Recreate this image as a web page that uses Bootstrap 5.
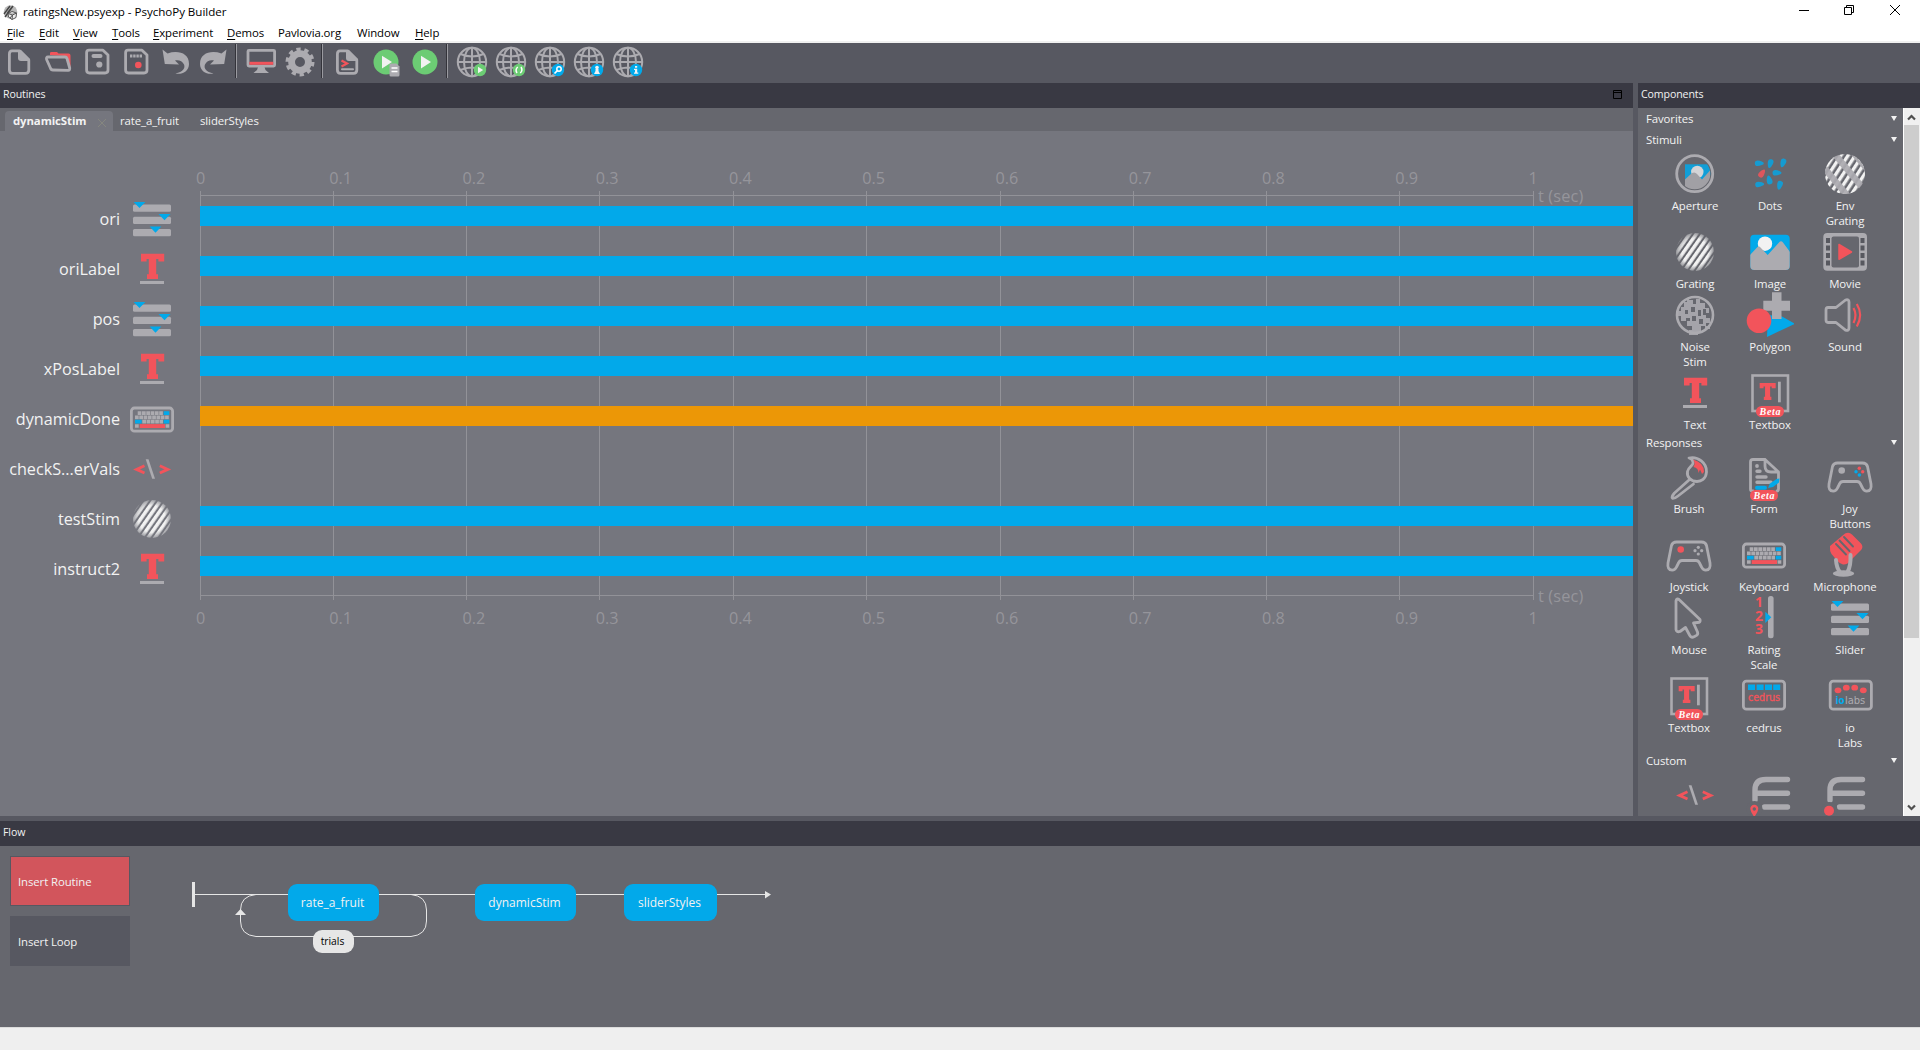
<!DOCTYPE html>
<html lang="en">
<head>
<meta charset="utf-8">
<title>ratingsNew.psyexp - PsychoPy Builder</title>
<link href="https://cdn.jsdelivr.net/npm/bootstrap@5.3.0/dist/css/bootstrap.min.css" rel="stylesheet">
<style>
:root{--pane:#66676e;--canvas:#75767e;--frame:#575861;--cap:#393943;--ico:#acabb0;--red:#f2545b;--blue:#02a9ea;--lt:#f2f2f2}
body{font-family:"Open Sans","Noto Sans",sans-serif;font-size:11.4px;letter-spacing:-.1px;line-height:15px;color:var(--lt);background:var(--frame);height:1050px;width:1920px;overflow:hidden}
svg{display:block;overflow:visible;flex:none}
.defs{position:absolute}
.titlebar{height:24px;color:#000;background:#fff;padding-left:3px}
.titlebar .doc-title{padding-left:5px;font-size:11.6px;letter-spacing:-.04px;margin-top:-2px}
.menus{height:19px;color:#000;background:#fff;border-bottom:2px solid #f0f0f0;padding-left:7px}
.menus span:nth-child(1){width:32px}.menus span:nth-child(2){width:34px}.menus span:nth-child(3){width:39px}.menus span:nth-child(4){width:41px}.menus span:nth-child(5){width:74px}.menus span:nth-child(6){width:51px}.menus span:nth-child(7){width:79px}.menus span:nth-child(8){width:58px}
.menus u{text-underline-offset:2px}
.tools{height:40px;background:var(--frame)}
.tools svg{width:40px;height:40px;margin:-2px -1px 0 0}
.tools svg:first-child{margin-left:-1px}
.tools i{width:2px;height:34px;margin:0 4px 4px 2px;background:linear-gradient(90deg,#33333a 50%,#9a9aa0 50%)}
.cap{height:25px;background:var(--cap);padding:0 0 2px 3px;font-size:10.6px}
.left-pane{width:1633px}
.tabs{height:23px;background:var(--pane);padding-left:5px}
.tab-on{height:20px;width:108px;background:var(--canvas);border-radius:4px 4px 0 0;padding-left:8px}
.tab-on b{margin-top:-2px}
.tab-off{padding:0 0 3px 7px;min-width:80px}
.timeline{height:685px;background:var(--canvas)}
.axis-labels{height:20px;padding-left:196px;font-size:16.2px;letter-spacing:0;color:#95959b}
.axis-labels span{width:133.25px;flex:none}
.axis-wrap{overflow:hidden;width:1633px}
.gridlines{position:absolute;left:0;top:0}
.tsec{position:absolute;left:1538px;font-size:16.4px;letter-spacing:.1px;color:#95959b}
.trow{height:50px}
.trow .nm{width:120px;text-align:right;font-size:16.2px;letter-spacing:0;line-height:20px;margin-top:-1px}
.trow svg{width:48px;height:48px;margin:0 24px 0 8px}
.trow .barr{height:20px;background:var(--blue);margin-bottom:6px}
.trow .barr.key{background:#ec9706}
.comp{width:282px}
.palette{height:708px;background:var(--pane);overflow:hidden}
.sect{height:21px;padding:0 6px 1px 8px}
.grp{display:grid;grid-template-columns:75px 75px 75px;padding-left:19.5px}
.grp.wide{grid-template-columns:75px 75px 97px;padding-left:13.5px}
.grp>div{display:flex;flex-direction:column;align-items:center;text-align:center}
.grp svg{width:48px;height:48px}
.scroller{width:17px;background:#f0f0f0;border-left:1px solid #fff;padding:17px 1px 0 0}
.scroller .thumb{height:513px;background:#cdcdcd;width:15px}
.flowpane{height:181px;background:var(--pane);padding:10px}
.fbtn{width:120px;height:50px;padding-left:7px;margin-bottom:10px;background:var(--frame);border:1px solid var(--frame)}
.fbtn.hot{background:#d2555c}
.node{position:absolute;top:38px;height:37px;border-radius:9px;background:var(--blue);font-size:12px;letter-spacing:0;padding-right:2px}
.foot{height:23px;background:#efefef;border-top:1px solid #dcdcdc}
.s{fill:none;stroke:var(--ico);stroke-width:2.8;stroke-linejoin:round;stroke-linecap:round}
.g{fill:var(--ico)}.r{fill:var(--red)}.b{fill:var(--blue)}.w{fill:#f2f2f2}.gn{fill:#6ccc74}
</style>
</head>
<body>
<svg class="defs" width="0" height="0">
<defs>
<pattern id="stripes" width="5.6" height="5.6" patternUnits="userSpaceOnUse" patternTransform="rotate(35)"><rect width="3.5" height="6" fill="#f2f2f2"/></pattern>
<pattern id="stripes2" width="6" height="6" patternUnits="userSpaceOnUse" patternTransform="rotate(33)"><rect width="3.4" height="7" fill="#f2f2f2"/></pattern>
<radialGradient id="fade"><stop offset=".7" stop-color="#fff"/><stop offset="1" stop-color="#fff" stop-opacity=".35"/></radialGradient>
<mask id="disc"><circle cx="24" cy="24" r="19" fill="url(#fade)"/></mask>
<clipPath id="c20"><circle cx="24" cy="24" r="20"/></clipPath>
<clipPath id="c16"><circle cx="23.7" cy="23.7" r="15.6"/></clipPath>
<clipPath id="cimg"><rect x="4.3" y="6.7" width="39.4" height="35.3" rx="4"/></clipPath>
<path id="drop" d="M-4.5 0C-4.5-3.6-1-3.2 2.5-1.8Q4.8-.6 4.5.2Q4.3 1.2 2.5 1.8C-1 3.2-4.5 3.6-4.5 0Z"/>
<g id="tee"><path class="r" d="M13 8.7H36.2V16.6H30.4V14H28.2V29.3H30V34H19V29.3H20.8V14H18.6V16.6H13Z"/></g>
<g id="beta"><rect class="r" x="10" y="37" width="28" height="11" rx="5.5"/><text x="24" y="45.7" text-anchor="middle" textLength="21" font-family="Liberation Serif,serif" font-weight="bold" font-style="italic" font-size="10" fill="#fff">Beta</text></g>
<g id="pad"><path class="s" d="M11.5 10H36.5Q40.5 10 41.5 13.500L45 31Q46 38 40.800 38.200Q38 38.200 36.500 35L34.500 31Q33.500 28.500 31 28.500H17Q14.500 28.500 13.500 31L11.500 35Q10 38.200 7.200 38.200Q2 38 3 31L6.500 13.500Q7.500 10 11.500 10Z"/></g>
<g id="globe"><g fill="none" stroke="#acabb0" stroke-width="2"><circle cx="20" cy="20" r="14.2"/><ellipse cx="20" cy="20" rx="8" ry="14.2"/><path d="M20 6V34M6 20H34M8.500 12Q20 17 31.500 12M8.500 28Q20 23 31.500 28"/></g></g>
</defs>
<symbol id="i-slider" viewBox="0 0 48 48"><g class="g"><rect x="5" y="9.600" width="38" height="7.200" rx="1.500"/><rect x="5" y="21.800" width="38" height="7.200" rx="1.500"/><rect x="5" y="34" width="38" height="7.200" rx="1.500"/></g><path class="b" d="M5.600 7H17.400L11.500 13ZM30.500 19H42.500L36.500 25.200ZM21.600 31.600H33.400L27.500 37.800Z"/></symbol>
<symbol id="i-text" viewBox="0 0 48 48"><use href="#tee"/><rect class="g" x="12" y="36" width="24" height="3"/></symbol>
<symbol id="i-key" viewBox="0 0 48 48"><rect class="s" x="3.400" y="13" width="41.200" height="23.200" rx="3"/><g fill="none" stroke="#acabb0" stroke-width="3.700" stroke-dasharray="3.700 .6"><path d="M9.700 18.100H35M7 22.400H41.300M14.300 26.700H35M7 31H11M37.600 31H41.300"/></g><path class="b" d="M35.700 16.200H41.300V20H35.700ZM7 24.800H13.700V28.600H7ZM35.700 24.800H41.300V28.600H35.700Z"/><rect class="r" x="11.700" y="29.100" width="25.300" height="3.900"/></symbol>
<symbol id="i-code" viewBox="0 0 48 48"><path fill="none" stroke="#f2545b" stroke-width="2.800" d="M16.500 20.800L8.500 24.400L16.500 28M31.800 20.800L39.800 24.400L31.800 28"/><path d="M17.700 14.300H20.500L27 33.700H24.200Z" class="g"/></symbol>
<symbol id="i-grating" viewBox="0 0 48 48"><rect width="48" height="48" fill="url(#stripes)" mask="url(#disc)"/></symbol>
<symbol id="i-env" viewBox="0 0 48 48"><g clip-path="url(#c20)"><rect width="48" height="48" fill="url(#stripes2)"/><path d="M12 2L45 42M0 14L30 50" stroke="#acabb0" stroke-width="6.500" opacity=".92"/><path d="M28 0L50 26" stroke="#acabb0" stroke-width="3"/></g></symbol>
<symbol id="i-aperture" viewBox="0 0 48 48"><g clip-path="url(#c16)" opacity=".85"><path class="b" d="M14 14.300H40V40H14Z"/><circle cx="26.300" cy="22" r="6.200" fill="#e8e8ea"/><path class="g" d="M14 29.500L21 23Q24 21.500 26 24L31 29.500L39 20.500V42H14Z"/></g><circle class="s" cx="23.700" cy="23.700" r="18"/></symbol>
<symbol id="i-dots" viewBox="0 0 48 48"><g class="b" opacity=".8"><use href="#drop" transform="translate(13.300 13.300)"/><use href="#drop" transform="translate(24.300 13.700) rotate(105)"/><use href="#drop" transform="translate(37 13) rotate(108)"/><use href="#drop" transform="translate(31 22.700)"/><use href="#drop" transform="translate(23.300 30) rotate(-105)"/><use href="#drop" transform="translate(13.700 34.300) rotate(-6)"/><use href="#drop" transform="translate(33.700 35.300) rotate(105)"/></g><use href="#drop" class="r" opacity=".85" transform="translate(16 23.300) rotate(-55)"/></symbol>
<symbol id="i-image" viewBox="0 0 48 48"><g clip-path="url(#cimg)"><path class="b" d="M0 0H48V48H0Z"/><circle class="w" cx="19" cy="15.700" r="7.200"/><path class="g" d="M4 27L11 19.500Q13 17.500 14.500 19.500L21.700 27L33 14.500Q35 12 37 14.500L44 24V42H4Z"/></g></symbol>
<symbol id="i-movie" viewBox="0 0 48 48"><rect class="g" x="2.300" y="5" width="43.700" height="37.700" rx="4"/><rect x="10.500" y="8.500" width="27.500" height="31" rx="2" fill="#66676e"/><g fill="#57585f"><path d="M5 10h4v5H5zM5 17.500h4v5H5zM5 25h4v5H5zM5 32.500h4v5H5zM39.500 10h4v5h-4zM39.500 17.500h4v5h-4zM39.500 25h4v5h-4zM39.500 32.500h4v5h-4z"/></g><path d="M18 16.500V31.300L30.500 24Z" class="r" stroke="#f2545b" stroke-width="1.500" stroke-linejoin="round"/></symbol>
<symbol id="i-noise" viewBox="0 0 48 48"><circle cx="24" cy="24" r="18" fill="none" stroke="#acabb0" stroke-width="2.600"/><path fill="#acabb0" opacity=".9" d="M18 9h4v4h3v-5h4v4h5v5h4v5h-3v-4h-3v6h3v3h4v5h-4v3h4v3h-5v-3h-4v6h-3v3h-9v-5h3v-4h-5v-5h3v-3h-4v3h-5v-5h-3v-5h3v-4h3v-5h3v-4h2zM20 16v5h4v-5zM27 19v6h3v-6zM21 25v5h4v-5zM28 28v5h4v-5zM14 19v4h3v-4z"/></symbol>
<symbol id="i-poly" viewBox="0 0 48 48"><path class="b" d="M22 24L36 25.500L49 32.700L21 46Z"/><path class="g" d="M26 1.300H35.500V9.700H44V19.700H35.500V28H26V19.700H17.300V9.700H26Z"/><circle class="r" cx="13" cy="29.700" r="12.300"/></symbol>
<symbol id="i-sound" viewBox="0 0 48 48"><path class="s" d="M7 16.500H15L24.500 9Q28 8 28 11V37Q28 40 24.500 39.200L15 31.500H7Q5 31.500 5 29V19Q5 16.500 7 16.500Z"/><path d="M32.500 17Q36.500 24 32.500 32M35.800 13Q42.500 24 35.800 35.500" fill="none" stroke="#f2545b" stroke-width="2.200"/></symbol>
<symbol id="i-textbox" viewBox="0 0 48 48"><rect x="6.500" y="6.500" width="35.500" height="35.500" fill="none" stroke="#acabb0" stroke-width="2.600"/><use href="#tee" transform="translate(4.700 8.200) scale(.69 .67)"/><rect class="g" x="32" y="12.700" width="2.800" height="20.600"/><use href="#beta"/></symbol>
<symbol id="i-brush" viewBox="0 0 48 48"><path class="s" d="M24 5C33 3 42 10 41.500 19C41 26 36 28.500 32 28.500C26 28.500 21.500 24 22.500 18.500C23.500 13.500 29 12.500 28 9Q27.500 6 24 5ZM24 27L9.500 40Q6 44 7.500 45.300Q10 45.500 13 43L28.500 31"/><path d="M28 6.500Q39 9.500 39 19L37 21Q36 18 35 16.500L33.500 20Q33.500 15 28.500 14Q31 10 28 6.500Z" class="r"/></symbol>
<symbol id="i-form" viewBox="0 0 48 48"><path class="s" d="M13 38H12Q10.500 38 10.500 36V9Q10.500 6.500 13 6.500H25L38.500 19V36Q38.500 38 37 38M25 6.500V13Q25 19 31 19H38.500"/><circle class="g" cx="17" cy="13" r="1.900"/><path d="M17 18.300H20M17 24H26M17 29.300H31" fill="none" stroke="#acabb0" stroke-width="3.400" stroke-linecap="round"/><path d="M17 34.700H25" stroke="#02a9ea" stroke-width="4" stroke-linecap="round"/><path class="b" d="M28 35L30 30.500L36.500 26L39.500 25.500L39 29.500L33 34Z"/><use href="#beta"/></symbol>
<symbol id="i-joyb" viewBox="0 0 48 48"><use href="#pad"/><circle class="g" cx="15.700" cy="17.500" r="3.300"/><g class="r"><circle cx="33.300" cy="15.300" r="1.700"/><circle cx="36.700" cy="18.700" r="1.700"/></g><g class="b"><circle cx="30" cy="18.700" r="1.700"/><circle cx="33.300" cy="22" r="1.700"/></g></symbol>
<symbol id="i-joys" viewBox="0 0 48 48"><g transform="translate(0 1)"><use href="#pad"/><circle class="r" cx="15.700" cy="17.500" r="3.300"/><g class="g"><circle cx="33.300" cy="15.300" r="1.600"/><circle cx="36.700" cy="18.700" r="1.600"/><circle cx="30" cy="18.700" r="1.600"/><circle cx="33.300" cy="22" r="1.600"/></g></g></symbol>
<symbol id="i-mic" viewBox="0 0 48 48"><ellipse class="g" cx="22.500" cy="42.500" rx="10.700" ry="3.200"/><path class="r" d="M24 2.500Q28 .5 31 3.500L40 12.500Q42.500 15.500 40.500 18.500L29 30Q26 34 22 33.500Q19 33 16 29.500L10.500 23Q8.500 20 9 15Z"/><path fill="none" stroke="#acabb0" stroke-width="4" stroke-linecap="round" d="M15 29Q15.500 37 19 41M29.500 24Q30 35 26.500 41"/><path d="M15 13L25 23.500M18.500 9.500L28.500 20M23 6L32 15.500" stroke="#66676e" stroke-width="1.900" stroke-linecap="round"/></symbol>
<symbol id="i-mouse" viewBox="0 0 48 48"><path class="s" d="M11.500 5.500Q12.500 4.500 14 5.500L35 25.500Q36 28.500 32.500 28.500L28.500 29L32.500 38Q33.500 41 30.500 42L28 43.200Q25.500 43.500 24.500 41L20.500 33.500L15 37.500Q11.500 38.500 11 35.500V7Z"/></symbol>
<symbol id="i-rating" viewBox="0 0 48 48"><g font-family="Open Sans,sans-serif" font-weight="bold" font-size="14" fill="#f2545b" text-anchor="middle"><text x="19" y="13">1</text><text x="19" y="27">2</text><text x="19" y="40">3</text></g><rect class="g" x="28" y="2" width="5.600" height="42.300" rx="2.500"/><path class="b" d="M25.300 17.700V29L31.300 23.300Z"/></symbol>
<symbol id="i-cedrus" viewBox="0 0 48 48"><rect class="s" x="3.400" y="9.200" width="41.200" height="28" rx="3"/><path class="b" d="M8 12.500h7v5.500h-7zM16.600 12.500h7v5.500h-7zM25 12.500h7v5.500h-7zM33.200 12.500h7v5.500h-7z"/><text x="8" y="28.700" textLength="32" lengthAdjust="spacingAndGlyphs" font-family="DejaVu Sans,sans-serif" font-size="10" fill="#f2545b" stroke="#f2545b" stroke-width=".3">cedrus</text></symbol>
<symbol id="i-io" viewBox="0 0 48 48"><rect class="s" x="4.200" y="9.200" width="41.200" height="28" rx="3"/><g class="r"><ellipse cx="12" cy="18.300" rx="3.400" ry="2.900"/><ellipse cx="20.300" cy="15.700" rx="3.400" ry="2.900"/><ellipse cx="28.700" cy="15.700" rx="3.400" ry="2.900"/><ellipse cx="37.300" cy="18.300" rx="3.400" ry="2.900"/></g><g font-family="DejaVu Sans,sans-serif" font-size="10.500"><text x="9.500" y="31.700" textLength="9" lengthAdjust="spacingAndGlyphs" font-weight="bold" fill="#02a9ea">io</text><text x="19" y="31.700" textLength="20" lengthAdjust="spacingAndGlyphs" fill="#acabb0">labs</text></g></symbol>
<symbol id="i-var" viewBox="0 0 48 48"><path fill="none" stroke="#acabb0" stroke-width="5.400" stroke-linecap="round" d="M41.500 8.500H20Q9 8.500 9 19V29M9 22.300H41.500M18.500 36H41.500"/></symbol>
<symbol id="t-new" viewBox="0 0 40 40"><path class="s" d="M13 8.800H20.500L29.800 18V28Q29.800 31.300 26.500 31.300H13.500Q10.400 31.300 10.400 28V12Q10.400 8.800 13 8.800Z"/><path class="g" d="M19 8H22L31 17V19H22Q19 19 19 16Z"/></symbol>
<symbol id="t-open" viewBox="0 0 40 40"><path class="r" d="M12 13V11Q12 10 13.500 10H19L20.500 11.500H30.500Q32.500 11.500 32.500 13.500V27L29 14.500L27.500 14Z"/><path class="s" d="M10 15H27Q28.500 15 29 16.500L31.700 26Q32 28.500 30 28.300L15 28Q13 28 12.400 26L8.600 17.500Q8 15 10 15Z"/></symbol>
<symbol id="t-save" viewBox="0 0 40 40"><path class="s" d="M12 8.200H26L31 13V28Q31 31 28 31H12.500Q9.600 31 9.600 28V11Q9.600 8.200 12 8.200Z"/><rect class="g" x="14.500" y="12" width="11" height="4" rx="2"/><circle class="g" cx="22.300" cy="22.500" r="3.100"/></symbol>
<symbol id="t-saveas" viewBox="0 0 40 40"><path class="s" d="M12 8.200H26L31 13V28Q31 31 28 31H12.500Q9.600 31 9.600 28V11Q9.600 8.200 12 8.200Z"/><path d="M14 14H26.500" stroke="#acabb0" stroke-width="3" stroke-dasharray="2.400 .8"/><circle class="r" cx="22.300" cy="23" r="3.300"/></symbol>
<symbol id="t-undo" viewBox="0 0 40 40"><path class="g" d="M7.500 7.500L12.500 11.500C23 8 34 11 34 22C34 30 26 33 20.500 31.500C28 30 30.500 26 29 22.500C27.500 18.500 23 17.500 20 18.500L24 22.500L9.800 22Z"/></symbol>
<symbol id="t-mon" viewBox="0 0 40 40"><rect class="s" x="7" y="8.300" width="26.600" height="15.800" rx="1"/><rect class="r" x="8.400" y="19.800" width="23.800" height="3"/><path class="g" d="M17 25H23.500L24.500 28L28 31H12.500L16 28Z"/></symbol>
<symbol id="t-gear" viewBox="0 0 40 40"><g fill="none" stroke="#acabb0"><circle cx="20" cy="20" r="8.400" stroke-width="6.800"/><circle cx="20" cy="20" r="12.500" stroke-width="4" stroke-dasharray="4.200 3.654"/></g></symbol>
<symbol id="t-coder" viewBox="0 0 40 40"><path class="s" d="M13 8.800H20.500L29.800 18V28Q29.800 31.300 26.500 31.300H13.500Q10.400 31.300 10.400 28V12Q10.400 8.800 13 8.800Z"/><path class="g" d="M19 8H22L31 17V19H22Q19 19 19 16Z"/><path d="M14.500 18.500L20 21.500L14.500 24.500" fill="none" stroke="#f2545b" stroke-width="2.200"/><path d="M15 27.300H26" fill="none" stroke="#acabb0" stroke-width="2" stroke-linecap="round"/></symbol>
<symbol id="t-run" viewBox="0 0 40 40"><circle class="gn" cx="20" cy="20" r="12.500"/><path class="w" d="M16 13.800V26.500L26 20.100Z"/></symbol>
<symbol id="t-runner" viewBox="0 0 40 40"><use href="#t-run" width="40" height="40"/><path class="g" d="M25 21.500H30.500L33.500 24.500V33Q33.500 34.500 32 34.500H25Q23.500 34.500 23.500 33V23Q23.500 21.500 25 21.500Z"/><path d="M25.500 26H31.500M25.500 29.500H31.500" stroke="#fff" stroke-width="1.600"/></symbol>
</svg>

<header>
  <div class="titlebar d-flex align-items-center">
    <svg width="15" height="15" viewBox="0 0 15 15"><circle cx="7.500" cy="7" r="6.800" fill="#b8b8b8"/><path d="M1 9L7 1M2 12L10 1M4.500 8L9.500 1.500" stroke="#444" stroke-width="1.400"/><path d="M5 8.500L9 6.500L13.500 8L13 12.500L9 14.500L5.500 12ZM5 8.500L9.500 10L13.500 8M9.500 10L9 14.500M9.500 10L7 13" stroke="#555" stroke-width="1" fill="#eee"/></svg>
    <span class="doc-title">ratingsNew.psyexp - PsychoPy Builder</span>
    <svg class="ms-auto" width="122" height="20" viewBox="0 0 122 20" fill="none" stroke="#000"><path d="M1 8.500H11M46.500 5.500H53.500V12.500H46.500ZM48.500 5V3.500H55.500V10.500H54M92 3L102 13M102 3L92 13"/></svg>
  </div>
  <nav class="menus d-flex align-items-center"><span><u>F</u>ile</span><span><u>E</u>dit</span><span><u>V</u>iew</span><span><u>T</u>ools</span><span><u>E</u>xperiment</span><span><u>D</u>emos</span><span>Pavlovia.org</span><span>Window</span><span><u>H</u>elp</span></nav>
  <div class="tools d-flex align-items-center">
    <svg><use href="#t-new"/></svg><svg><use href="#t-open"/></svg><svg><use href="#t-save"/></svg><svg><use href="#t-saveas"/></svg><svg><use href="#t-undo"/></svg><svg viewBox="0 0 40 40"><use href="#t-undo" width="40" height="40" transform="translate(40 0) scale(-1 1)"/></svg><i></i>
    <svg><use href="#t-mon"/></svg><svg><use href="#t-gear"/></svg><i></i>
    <svg><use href="#t-coder"/></svg><svg><use href="#t-runner"/></svg><svg><use href="#t-run"/></svg><i></i>
    <svg viewBox="0 0 40 40"><use href="#globe"/><circle class="gn" cx="28" cy="28" r="6.200"/><path class="w" d="M26 24.800V31.200L31.200 28Z"/></svg>
    <svg viewBox="0 0 40 40"><use href="#globe"/><circle class="gn" cx="28" cy="28" r="6.200"/><path d="M26.800 25Q23.800 27.500 26 31M29.200 31Q32.200 28.500 30 25" fill="none" stroke="#fff" stroke-width="1.500"/></svg>
    <svg viewBox="0 0 40 40"><use href="#globe"/><circle class="b" cx="28" cy="28" r="6.200"/><circle cx="29" cy="27" r="2.200" fill="none" stroke="#fff" stroke-width="1.500"/><path d="M27.500 28.500L24.500 31.500" stroke="#fff" stroke-width="1.700"/></svg>
    <svg viewBox="0 0 40 40"><use href="#globe"/><circle class="b" cx="28" cy="28" r="6.200"/><circle class="w" cx="28" cy="25.500" r="1.800"/><path class="w" d="M26.500 27H29.500V29L31 32H25L26.500 29Z"/></svg>
    <svg viewBox="0 0 40 40"><use href="#globe"/><circle class="b" cx="28" cy="28" r="6.200"/><path class="w" d="M27 24H29.200V25.800H27ZM26 26.700H29.200V30.500H30.300V31.800H26V30.500H27V28H26Z"/></svg>
  </div>
</header>

<main class="d-flex justify-content-between">
  <section class="left-pane">
    <div class="cap d-flex align-items-center">Routines<svg class="ms-auto" style="margin-right:11px" width="9" height="9" viewBox="0 0 9 9"><path d="M.5.5H8.500V8.500H.5ZM0 2.500H9" fill="none" stroke="#000"/></svg></div>
    <div class="tabs d-flex align-items-end">
      <div class="tab-on d-flex align-items-center"><b>dynamicStim</b><svg class="ms-auto" style="margin:3px 7px 0 0" width="8" height="8" viewBox="0 0 8 8"><path d="M0 0L8 8M8 0L0 8" stroke="#85867f"/></svg></div>
      <div class="tab-off">rate_a_fruit</div><div class="tab-off">sliderStyles</div>
    </div>
    <div class="timeline position-relative">
      <svg class="gridlines" width="1633" height="480" viewBox="0 0 1633 480"><path fill="none" stroke="#929298" shape-rendering="crispEdges" d="M200 64.500H1533M200 464.500H1533M200.500 60V469M333.500 60V469M466.500 60V469M599.500 60V469M733.500 60V469M866.500 60V469M1000.500 60V469M1133.500 60V469M1266.500 60V469M1399.500 60V469M1533.500 60V469"/></svg>
      <div class="position-relative" style="padding-top:37px">
        <div class="axis-wrap"><div class="axis-labels d-flex align-items-center"><span>0</span><span>0.1</span><span>0.2</span><span>0.3</span><span>0.4</span><span>0.5</span><span>0.6</span><span>0.7</span><span>0.8</span><span>0.9</span><span>1</span></div></div>
        <div class="tsec" style="top:57px">t (sec)</div>
        <div style="padding-top:6px">
          <div class="trow d-flex align-items-center"><span class="nm">ori</span><svg><use href="#i-slider"/></svg><div class="barr flex-grow-1"></div></div>
          <div class="trow d-flex align-items-center"><span class="nm">oriLabel</span><svg><use href="#i-text"/></svg><div class="barr flex-grow-1"></div></div>
          <div class="trow d-flex align-items-center"><span class="nm">pos</span><svg><use href="#i-slider"/></svg><div class="barr flex-grow-1"></div></div>
          <div class="trow d-flex align-items-center"><span class="nm">xPosLabel</span><svg><use href="#i-text"/></svg><div class="barr flex-grow-1"></div></div>
          <div class="trow d-flex align-items-center"><span class="nm">dynamicDone</span><svg><use href="#i-key"/></svg><div class="barr key flex-grow-1"></div></div>
          <div class="trow d-flex align-items-center"><span class="nm">checkS...erVals</span><svg><use href="#i-code"/></svg></div>
          <div class="trow d-flex align-items-center"><span class="nm">testStim</span><svg><use href="#i-grating"/></svg><div class="barr flex-grow-1"></div></div>
          <div class="trow d-flex align-items-center"><span class="nm">instruct2</span><svg><use href="#i-text"/></svg><div class="barr flex-grow-1"></div></div>
        </div>
        <div class="tsec" style="top:457px">t (sec)</div>
        <div class="axis-wrap" style="margin-top:14px"><div class="axis-labels d-flex align-items-center"><span>0</span><span>0.1</span><span>0.2</span><span>0.3</span><span>0.4</span><span>0.5</span><span>0.6</span><span>0.7</span><span>0.8</span><span>0.9</span><span>1</span></div></div>
      </div>
    </div>
  </section>

  <aside class="comp">
    <div class="cap d-flex align-items-center">Components</div>
    <div class="d-flex">
      <div class="palette flex-grow-1">
        <div class="sect d-flex justify-content-between align-items-center">Favorites<svg width="6" height="5"><path class="w" d="M0 0H6L3 5Z"/></svg></div>
        <div class="sect d-flex justify-content-between align-items-center">Stimuli<svg width="6" height="5"><path class="w" d="M0 0H6L3 5Z"/></svg></div>
        <div class="grp">
          <div><svg><use href="#i-aperture"/></svg>Aperture</div><div><svg><use href="#i-dots"/></svg>Dots</div><div><svg><use href="#i-env"/></svg>Env<br>Grating</div>
          <div><svg><use href="#i-grating"/></svg>Grating</div><div><svg><use href="#i-image"/></svg>Image</div><div><svg><use href="#i-movie"/></svg>Movie</div>
          <div><svg><use href="#i-noise"/></svg>Noise<br>Stim</div><div><svg><use href="#i-poly"/></svg>Polygon</div><div><svg><use href="#i-sound"/></svg>Sound</div>
          <div><svg><use href="#i-text"/></svg>Text</div><div><svg><use href="#i-textbox"/></svg>Textbox</div>
        </div>
        <div class="sect d-flex justify-content-between align-items-center">Responses<svg width="6" height="5"><path class="w" d="M0 0H6L3 5Z"/></svg></div>
        <div class="grp wide">
          <div><svg><use href="#i-brush"/></svg>Brush</div><div><svg><use href="#i-form"/></svg>Form</div><div><svg><use href="#i-joyb"/></svg>Joy<br>Buttons</div>
          <div><svg><use href="#i-joys"/></svg>Joystick</div><div><svg><use href="#i-key"/></svg>Keyboard</div><div style="margin-right:10px"><svg><use href="#i-mic"/></svg>Microphone</div>
          <div><svg><use href="#i-mouse"/></svg>Mouse</div><div><svg><use href="#i-rating"/></svg>Rating<br>Scale</div><div><svg><use href="#i-slider"/></svg>Slider</div>
          <div><svg><use href="#i-textbox"/></svg>Textbox</div><div><svg><use href="#i-cedrus"/></svg>cedrus</div><div><svg><use href="#i-io"/></svg>io<br>Labs</div>
        </div>
        <div class="sect d-flex justify-content-between align-items-center">Custom<svg width="6" height="5"><path class="w" d="M0 0H6L3 5Z"/></svg></div>
        <div class="grp">
          <div><svg><use href="#i-code"/></svg></div>
          <div><svg viewBox="0 0 48 48"><use href="#i-var" width="48" height="48"/><circle cx="8.500" cy="38" r="8" fill="#66676e"/><path d="M8.300 33.800A4 4 0 0 1 12.300 38Q12 41 8.300 46Q4.600 41 4.300 38A4 4 0 0 1 8.300 33.800ZM8.300 36.300A1.700 1.700 0 1 0 8.310 36.300Z" fill-rule="evenodd" class="r"/></svg></div>
          <div><svg viewBox="0 0 48 48"><use href="#i-var" width="48" height="48"/><circle cx="8.500" cy="39" r="8" fill="#66676e"/><circle class="r" cx="8" cy="39.700" r="5"/></svg></div>
        </div>
      </div>
      <div class="scroller d-flex flex-column"><div class="thumb"></div>
        <svg class="mt-auto" width="15" height="17" viewBox="0 0 15 17" fill="none" stroke="#505050" stroke-width="2.200"><path d="M4 6.500L7.500 10L11 6.500M4 -679.500L7.500 -683L11 -679.500"/></svg></div>
    </div>
  </aside>
</main>

<section style="margin-top:5px">
  <div class="cap" style="padding-top:4px">Flow</div>
  <div class="flowpane position-relative">
    <div class="fbtn hot d-flex align-items-center">Insert Routine</div>
    <div class="fbtn d-flex align-items-center">Insert Loop</div>
    <svg style="position:absolute;left:0;top:0" width="800" height="130" viewBox="0 0 800 130"><g fill="none" stroke="#e6e6e6"><path d="M195 48.500H766"/><path d="M256 48.500Q240.500 50 240.500 64V75Q240.500 89 256 90.500H411Q426.500 89 426.500 75V64Q426.500 50 411 48.500"/></g><path fill="#e6e6e6" d="M192 36h3v25h-3zM765 45L771 48.500L765 52.500ZM235 69H246L240.500 63Z"/></svg>
    <div class="node d-flex align-items-center justify-content-center" style="left:288px;width:91px">rate_a_fruit</div>
    <div class="node d-flex align-items-center justify-content-center" style="left:475px;width:101px">dynamicStim</div>
    <div class="node d-flex align-items-center justify-content-center" style="left:624px;width:93px">sliderStyles</div>
    <div class="node d-flex align-items-center justify-content-center" style="left:313px;width:41px;top:84px;height:23px;background:#e6e6e6;color:#000;font-size:10.300px">trials</div>
  </div>
</section>
<footer class="foot"></footer>
<script src="https://cdn.jsdelivr.net/npm/bootstrap@5.3.0/dist/js/bootstrap.bundle.min.js"></script>
</body>
</html>
